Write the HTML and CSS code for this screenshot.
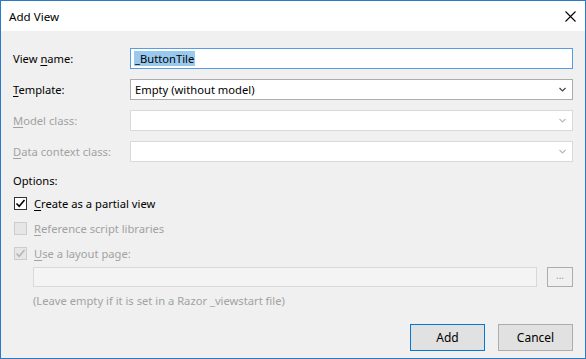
FILE: index.html
```html
<!DOCTYPE html>
<html lang="en">
<head>
  <meta charset="UTF-8">
  <title>Add View</title>
  <link rel="stylesheet" href="styles.css">
</head>
<body>

<div class="window">
  <div class="titlebar">
    <span class="title">Add View</span>
    <svg class="close" width="11" height="11" viewBox="0 0 11 11">
      <path d="M0.5 0.5 L10.5 10.5 M10.5 0.5 L0.5 10.5" stroke="#000" stroke-width="1.1" fill="none"/>
    </svg>
  </div>

  <div class="content">
    <div class="form">
      <label>View <u>n</u>ame:</label>
      <div class="field focused"><span class="selected">_ButtonTile</span></div>

      <label><u>T</u>emplate:</label>
      <div class="field select">
        <span>Empty (without model)</span>
        <svg class="chevron" width="7" height="5" viewBox="0 0 7 5"><path d="M0.5 1 L3.5 4 L6.5 1" stroke="#444" stroke-width="1.2" fill="none"/></svg>
      </div>

      <label class="disabled"><u>M</u>odel class:</label>
      <div class="field select off">
        <span></span>
        <svg class="chevron" width="7" height="5" viewBox="0 0 7 5"><path d="M0.5 1 L3.5 4 L6.5 1" stroke="#b8b8b8" stroke-width="1.1" fill="none"/></svg>
      </div>

      <label class="disabled"><u>D</u>ata context class:</label>
      <div class="field select off">
        <span></span>
        <svg class="chevron" width="7" height="5" viewBox="0 0 7 5"><path d="M0.5 1 L3.5 4 L6.5 1" stroke="#b8b8b8" stroke-width="1.1" fill="none"/></svg>
      </div>
    </div>

    <div class="options-title">Options:</div>

    <div class="check-row">
      <span class="box checked">
        <svg width="11" height="11" viewBox="0 0 11 11"><path d="M1.5 5.5 L4.2 8.3 L9.5 2" stroke="#000" stroke-width="1.6" fill="none"/></svg>
      </span>
      <span><u>C</u>reate as a partial view</span>
    </div>
    <div class="check-row disabled">
      <span class="box off"></span>
      <span><u>R</u>eference script libraries</span>
    </div>
    <div class="check-row disabled">
      <span class="box off">
        <svg width="11" height="11" viewBox="0 0 11 11"><path d="M1.5 5.5 L4.2 8.3 L9.5 2" stroke="#b4b4b4" stroke-width="1.5" fill="none"/></svg>
      </span>
      <span><u>U</u>se a layout page:</span>
    </div>

    <div class="layout-row">
      <div class="layout-input"></div>
      <div class="browse">...</div>
    </div>
    <div class="hint">(Leave empty if it is set in a Razor _viewstart file)</div>

    <div class="buttons">
      <div class="btn default">Add</div>
      <div class="btn">Cancel</div>
    </div>
  </div>
</div>

</body>
</html>
```

FILE: styles.css
```css
body {
  margin: 0;
  font-family: "Noto Sans", "Open Sans", sans-serif;
  font-size: 11.2px;
  color: #000;
  background: #f0f0f0;
}
.window {
  width: 586px;
  height: 359px;
  box-sizing: border-box;
  border: 1px solid #2b7bc4;
  background: #f0f0f0;
  display: flex;
  flex-direction: column;
}
.titlebar {
  height: 30px;
  background: #fff;
  display: flex;
  align-items: center;
  justify-content: space-between;
  padding: 0 9px 0 8px;
  flex-shrink: 0;
}
.title {
  font-size: 11.6px;
}
.content {
  flex: 1;
  display: flex;
  flex-direction: column;
  padding: 17px 12px 7px 12px;
}
.form {
  display: grid;
  grid-template-columns: 117px 1fr;
  grid-auto-rows: 21px;
  row-gap: 10px;
  align-items: center;
}
u {
  text-decoration-thickness: 1px;
  text-underline-offset: 2px;
}
.disabled {
  color: #a2a2a2;
}
.field {
  height: 21px;
  box-sizing: border-box;
  border: 1px solid #adadad;
  background: #fff;
  display: flex;
  align-items: center;
  padding: 0 3px;
}
.field.focused {
  border-color: #569de5;
}
.field.off {
  border-color: #d9d9d9;
}
.select {
  justify-content: space-between;
  padding: 0 5px 0 4px;
}
.selected {
  background: #99c9ef;
  line-height: 15px;
  padding: 0 1px;
}
.chevron {
  margin-right: 1px;
}
.options-title {
  margin-top: 11px;
  line-height: 16px;
}
.check-row {
  height: 25px;
  display: flex;
  align-items: center;
  gap: 7px;
  margin-left: 1px;
}
.options-title + .check-row {
  margin-top: 2px;
}
.box {
  width: 13px;
  height: 13px;
  box-sizing: border-box;
  border: 1px solid #333;
  background: #fff;
  display: flex;
  align-items: center;
  justify-content: center;
}
.box.off {
  border-color: #cccccc;
  background: #e6e6e6;
}
.layout-row {
  display: flex;
  gap: 10px;
  margin-left: 20px;
  margin-top: 1px;
}
.layout-input {
  flex: 1;
  height: 20px;
  box-sizing: border-box;
  border: 1px solid #d9d9d9;
  background: #f4f4f4;
}
.browse {
  width: 26px;
  height: 20px;
  box-sizing: border-box;
  border: 1px solid #adadad;
  background: #f0f0f0;
  color: #999;
  font-size: 10px;
  text-align: center;
  line-height: 14px;
}
.hint {
  margin: 6px 0 0 20px;
  line-height: 16px;
  color: #a2a2a2;
}
.buttons {
  margin-top: auto;
  display: flex;
  justify-content: flex-end;
  gap: 13px;
}
.btn {
  width: 75px;
  height: 27px;
  box-sizing: border-box;
  border: 1px solid #adadad;
  background: #e1e1e1;
  display: flex;
  align-items: center;
  justify-content: center;
  font-size: 12px;
}
.btn.default {
  border-color: #0078d7;
}
```
